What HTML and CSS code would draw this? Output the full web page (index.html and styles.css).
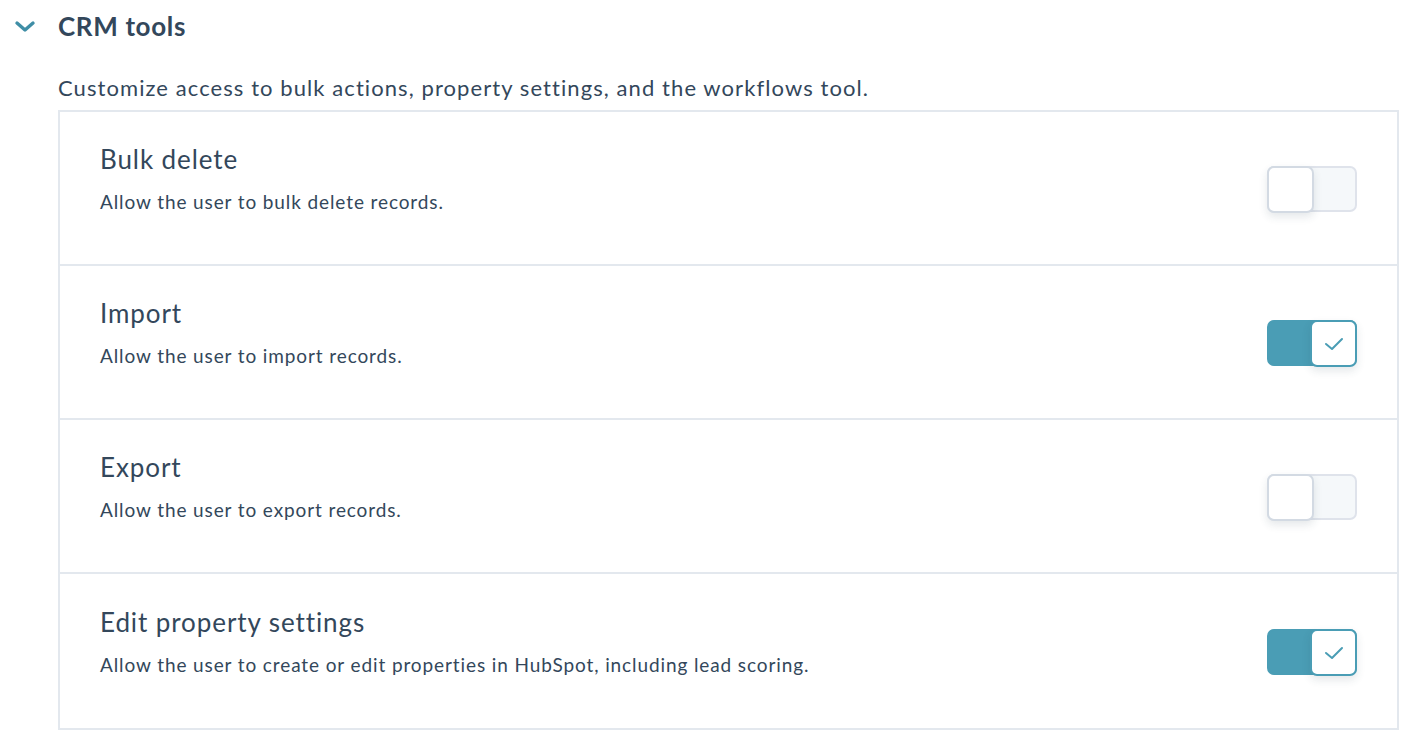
FILE: index.html
```html
<!DOCTYPE html>
<html>
<head>
<meta charset="utf-8">
<link rel="stylesheet" href="styles.css">
</head>
<body>
<div class="section">
  <div class="section-header">
    <svg class="chevron" width="22" height="14" viewBox="0 0 22 14"><path d="M3 3 L11 10 L19 3" fill="none" stroke="#3f8ea6" stroke-width="3.4" stroke-linecap="round" stroke-linejoin="round"/></svg>
    <h2 class="section-title">CRM tools</h2>
  </div>
  <p class="section-desc">Customize access to bulk actions, property settings, and the workflows tool.</p>
  <div class="card">
    <div class="row">
      <div class="row-text">
        <div class="row-title">Bulk delete</div>
        <div class="row-desc">Allow the user to bulk delete records.</div>
      </div>
      <div class="toggle"><span class="knob"></span></div>
    </div>
    <div class="row">
      <div class="row-text">
        <div class="row-title">Import</div>
        <div class="row-desc">Allow the user to import records.</div>
      </div>
      <div class="toggle on"><span class="knob"><svg width="22" height="16" viewBox="0 0 22 16"><path d="M3 8 L9 13 L19 3" fill="none" stroke="#4a9db5" stroke-width="2" stroke-linecap="round" stroke-linejoin="round"/></svg></span></div>
    </div>
    <div class="row">
      <div class="row-text">
        <div class="row-title">Export</div>
        <div class="row-desc">Allow the user to export records.</div>
      </div>
      <div class="toggle"><span class="knob"></span></div>
    </div>
    <div class="row">
      <div class="row-text">
        <div class="row-title">Edit property settings</div>
        <div class="row-desc">Allow the user to create or edit properties in HubSpot, including lead scoring.</div>
      </div>
      <div class="toggle on"><span class="knob"><svg width="22" height="16" viewBox="0 0 22 16"><path d="M3 8 L9 13 L19 3" fill="none" stroke="#4a9db5" stroke-width="2" stroke-linecap="round" stroke-linejoin="round"/></svg></span></div>
    </div>
  </div>
</div>
</body>
</html>
```

FILE: styles.css
```css
* { box-sizing: border-box; }
body {
  margin: 0;
  background: #ffffff;
  font-family: Lato, "Open Sans", sans-serif;
  color: #33475b;
}
.section {
  padding: 0 22px 0 14px;
  width: 1420px;
}
.section-header {
  display: flex;
  align-items: center;
  height: 52px;
}
.chevron {
  width: 22px;
  height: 14px;
  margin-right: 22px;
  margin-top: 1px;
}
.section-title {
  margin: 0;
  font-size: 26px;
  font-weight: 700;
  line-height: 52px;
  letter-spacing: 0.025em;
  color: #33475b;
}
.section-desc {
  margin: 20px 0 0 44px;
  font-size: 22px;
  line-height: 32px;
  height: 38px;
  letter-spacing: 0.049em;
  color: #33475b;
}
.card {
  margin-left: 44px;
  width: 1341px;
  border: 2px solid #e3e8ee;
}
.row {
  display: flex;
  align-items: center;
  justify-content: space-between;
  height: 154px;
  padding: 0 40px;
  border-bottom: 2px solid #e3e8ee;
}
.row:last-child { border-bottom: none; }
.row-text {
  padding-bottom: 19px;
}
.row-title {
  font-size: 26px;
  line-height: 32px;
  margin-bottom: 15px;
  letter-spacing: 0.035em;
}
.row-desc {
  font-size: 19px;
  line-height: 24px;
  letter-spacing: 0.047em;
}
.toggle {
  position: relative;
  width: 90px;
  height: 46px;
  border: 2px solid #dfe3eb;
  border-radius: 7px;
  background: #f5f8fa;
  margin-top: 2px;
}
.knob {
  position: absolute;
  top: -2px;
  left: -2px;
  width: 47px;
  height: 47px;
  background: #ffffff;
  border: 2px solid #d3dae3;
  border-radius: 7px;
  box-shadow: 0 4px 8px rgba(45, 62, 80, 0.12);
  display: flex;
  align-items: center;
  justify-content: center;
}
.toggle.on {
  background: #4a9db5;
  border-color: #4a9db5;
}
.toggle.on .knob {
  left: auto;
  right: -2px;
  border-color: #4a9db5;
}
```
